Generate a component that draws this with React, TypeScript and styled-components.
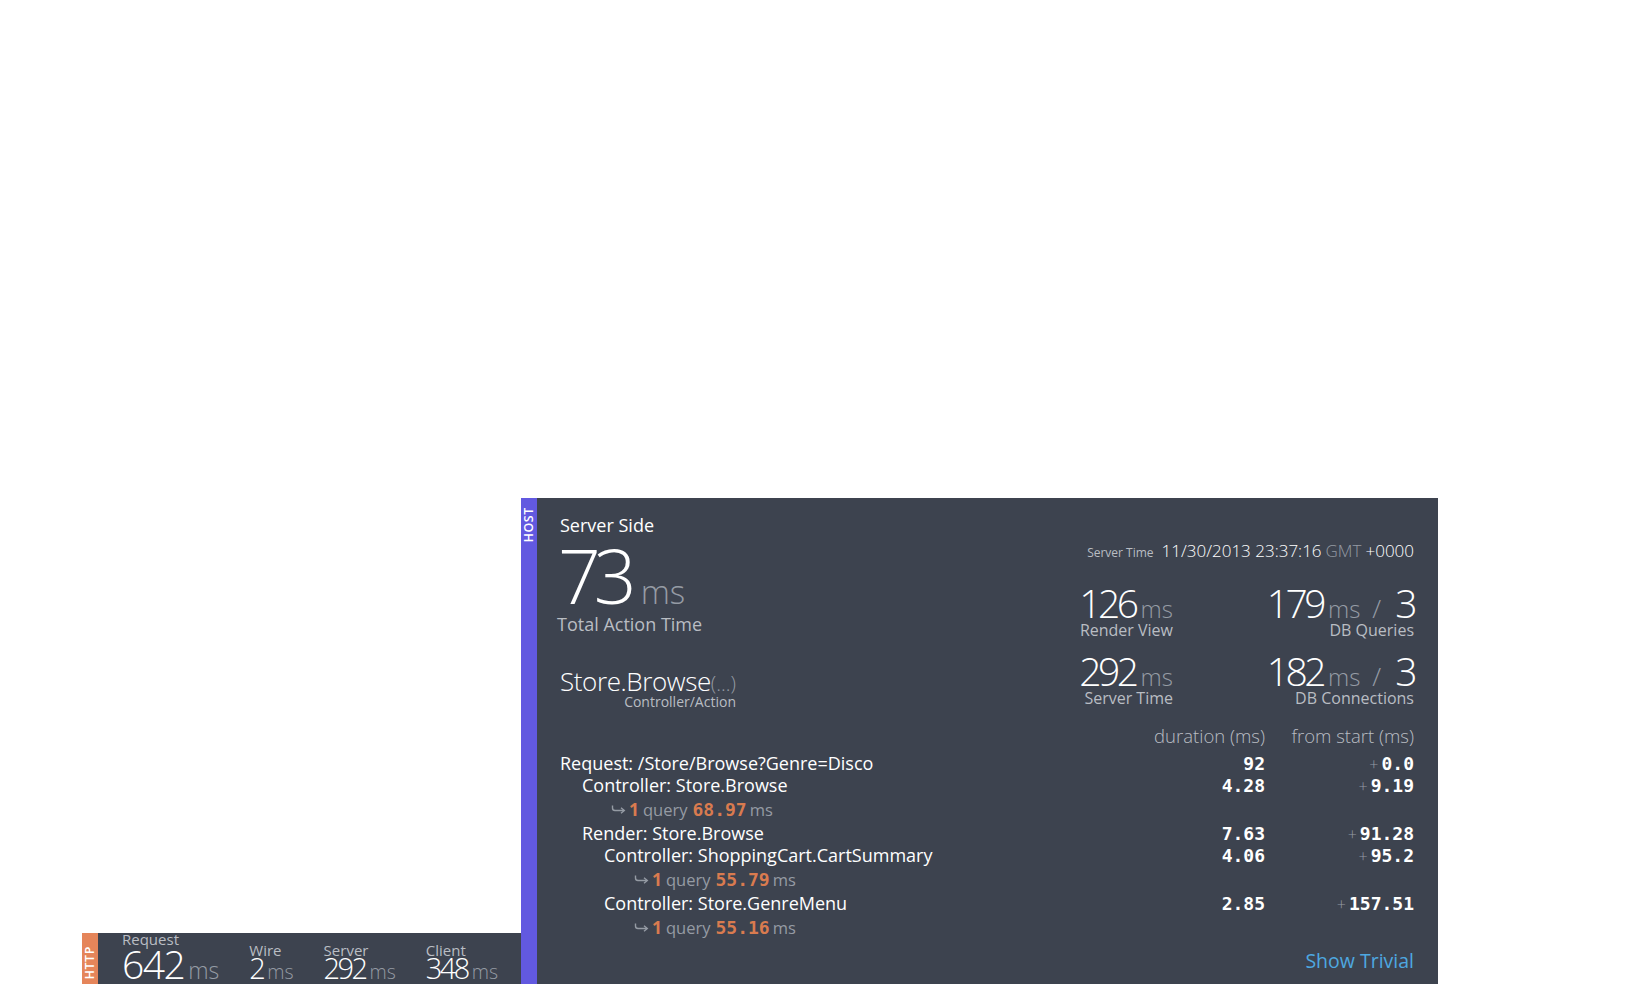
import React from "react";
import styled, { createGlobalStyle, css } from "styled-components";

const Global = createGlobalStyle`
  html, body { margin: 0; padding: 0; background: #ffffff; overflow: hidden; }
  body { font-family: "Open Sans", "Noto Sans", sans-serif; }
`;

const SANS = `"Open Sans", "Noto Sans", sans-serif`;
const MONO = `"DejaVu Sans Mono", "Liberation Mono", monospace`;
const BG = "#3d434f";
const GRAY = "#959ba4";
const LIGHT = "#b9bdc3";
const ORANGE = "#d97b4f";

const numeric = css`
  font-family: ${SANS};
  font-weight: 300;
`;

const Page = styled.div`
  height: 100vh;
  box-sizing: border-box;
  display: flex;
  align-items: flex-end;
  padding-left: 82px;
`;

const Section = styled.section<{ $h: number }>`
  display: flex;
  height: ${(p) => p.$h}px;
  background: ${BG};
  color: #fff;
  overflow: hidden;
  font-family: ${SANS};
`;

const Tab = styled.div<{ $color: string; $top: number }>`
  width: 16px;
  flex: none;
  background: ${(p) => p.$color};
  padding-top: ${(p) => p.$top}px;
  box-sizing: border-box;
`;

const TabLabel = styled.span`
  display: block;
  writing-mode: vertical-rl;
  transform: rotate(180deg);
  font-size: 12.5px;
  font-weight: 600;
  line-height: 16px;
  letter-spacing: 0.6px;
  color: #fff;
`;

/* ---------- HTTP bar ---------- */
const HttpBody = styled.div`
  width: 423px;
  box-sizing: border-box;
  display: flex;
  align-items: flex-end;
  gap: 30px;
  padding: 0 0 6px 24px;
`;

const Metric = styled.div`
  display: flex;
  flex-direction: column;
`;

const MetricLabel = styled.div<{ $gap: number }>`
  font-size: 15px;
  line-height: 12px;
  color: ${LIGHT};
  margin-bottom: ${(p) => p.$gap}px;
  white-space: nowrap;
`;

const MetricValue = styled.div<{ $size: number; $lh: number; $ls: number }>`
  ${numeric};
  font-size: ${(p) => p.$size}px;
  line-height: ${(p) => p.$lh}px;
  letter-spacing: ${(p) => p.$ls}px;
  white-space: nowrap;
`;

const Unit = styled.span<{ $size: number; $gap?: number }>`
  font-family: ${SANS};
  font-size: ${(p) => p.$size}px;
  line-height: 0;
  letter-spacing: 0;
  color: ${GRAY};
  font-weight: 300;
  margin-left: ${(p) => p.$gap ?? 3}px;
`;

/* ---------- Host panel ---------- */
const HostBody = styled.div`
  width: 901px;
  box-sizing: border-box;
  padding: 15px 24px 0 23px;
  display: flex;
  flex-direction: column;
`;

const TopArea = styled.div`
  display: flex;
  justify-content: space-between;
  align-items: flex-start;
`;

const Summary = styled.div`
  display: flex;
  flex-direction: column;
  align-items: flex-start;
`;

const Title = styled.div`
  font-size: 18px;
  line-height: 24px;
`;

const BigValue = styled.div`
  ${numeric};
  margin-top: 6px;
  margin-left: -2px;
  font-size: 75px;
  line-height: 64px;
  letter-spacing: -7px;
`;

const Caption = styled.div`
  margin-top: 6px;
  margin-left: -3px;
  font-size: 18px;
  line-height: 22px;
  color: ${LIGHT};
`;

const ActionBlock = styled.div`
  margin-top: 30px;
  display: flex;
  flex-direction: column;
  align-items: flex-end;
`;

const ActionName = styled.div`
  font-size: 26px;
  line-height: 32px;
  font-weight: 300;
  letter-spacing: -0.4px;
`;

const ActionHint = styled.div`
  margin-top: -3px;
  font-size: 14px;
  line-height: 16px;
  color: ${LIGHT};
`;

const Stats = styled.div`
  padding-top: 26px;
  display: flex;
  flex-direction: column;
  align-items: flex-end;
`;

const ServerTime = styled.div`
  font-size: 17px;
  line-height: 24px;
  font-weight: 300;
  white-space: nowrap;
`;

const Small = styled.span`
  font-size: 12px;
  color: ${LIGHT};
  font-weight: 400;
  margin-right: 8px;
`;

const Dim = styled.span`
  color: ${GRAY};
  margin: 0 4px;
`;

const StatGrid = styled.div`
  margin-top: 18px;
  display: grid;
  grid-template-columns: 100px 241px;
  row-gap: 12px;
  justify-items: end;
`;

const Stat = styled.div`
  display: flex;
  flex-direction: column;
  align-items: flex-end;
`;

const StatValue = styled.div`
  ${numeric};
  font-size: 39px;
  line-height: 40px;
  letter-spacing: -3.5px;
  white-space: nowrap;
`;

const Slash = styled.span`
  font-family: ${SANS};
  font-size: 26px;
  line-height: 0;
  letter-spacing: 0;
  color: ${GRAY};
  font-weight: 300;
  margin: 0 14px 0 12px;
`;

const StatLabel = styled.div`
  margin-top: -2px;
  font-size: 16px;
  line-height: 18px;
  color: ${LIGHT};
  white-space: nowrap;
`;

const Timeline = styled.div`
  margin-top: 14px;
  display: flex;
  flex-direction: column;
`;

const Row = styled.div<{ $head?: boolean }>`
  display: grid;
  grid-template-columns: 1fr 112px 149px;
  align-items: baseline;
  font-size: 18px;
  height: ${(p) => (p.$head ? 24 : 22)}px;
  line-height: ${(p) => (p.$head ? 24 : 22)}px;
  margin-bottom: ${(p) => (p.$head ? 4 : 0)}px;
  color: ${(p) => (p.$head ? LIGHT : "#fff")};
  white-space: nowrap;
`;

const Name = styled.div<{ $depth: number }>`
  padding-left: ${(p) => p.$depth * 22}px;
`;

const Num = styled.div`
  text-align: right;
  font-family: ${MONO};
  font-weight: 700;
  font-size: 18px;
`;

const HeadCell = styled.div`
  text-align: right;
  font-weight: 300;
  font-size: 18.5px;
`;

const Plus = styled.span`
  font-family: ${SANS};
  font-weight: 300;
  font-size: 16px;
  line-height: 0;
  color: ${GRAY};
  margin-right: 3px;
`;

const QueryLine = styled.div<{ $indent: number }>`
  display: flex;
  align-items: baseline;
  height: 26px;
  padding-left: ${(p) => p.$indent}px;
  font-size: 16.5px;
  line-height: 26px;
  color: ${GRAY};
  white-space: nowrap;
`;

const Hook = styled.svg`
  width: 15px;
  height: 9px;
  margin-right: 3px;
  align-self: center;
`;

const QCount = styled.span`
  color: ${ORANGE};
  font-weight: 700;
  font-size: 17.5px;
  margin-right: 4px;
`;

const QTime = styled.span`
  color: ${ORANGE};
  font-family: ${MONO};
  font-weight: 700;
  font-size: 18px;
  margin: 0 3px 0 5px;
`;

const Footer = styled.div`
  margin-top: 9px;
  display: flex;
  justify-content: flex-end;
`;

const TrivialLink = styled.a`
  font-size: 19.5px;
  line-height: 24px;
  color: #4ea8e0;
  text-decoration: none;
  cursor: pointer;
`;

type Item = {
  kind: "row" | "query";
  name?: string;
  depth?: number;
  dur?: string;
  start?: string;
  indent?: number;
  time?: string;
};

const items: Item[] = [
  { kind: "row", name: "Request: /Store/Browse?Genre=Disco", depth: 0, dur: "92", start: "0.0" },
  { kind: "row", name: "Controller: Store.Browse", depth: 1, dur: "4.28", start: "9.19" },
  { kind: "query", indent: 51, time: "68.97" },
  { kind: "row", name: "Render: Store.Browse", depth: 1, dur: "7.63", start: "91.28" },
  { kind: "row", name: "Controller: ShoppingCart.CartSummary", depth: 2, dur: "4.06", start: "95.2" },
  { kind: "query", indent: 74, time: "55.79" },
  { kind: "row", name: "Controller: Store.GenreMenu", depth: 2, dur: "2.85", start: "157.51" },
  { kind: "query", indent: 74, time: "55.16" },
];

const HookIcon = () => (
  <Hook viewBox="0 0 15 9">
    <path d="M1.5 0.5 V3 Q1.5 5.5 4 5.5 H13" fill="none" stroke={GRAY} strokeWidth="1.4" />
    <path d="M10 2.8 L13.3 5.5 L10 8.2" fill="none" stroke={GRAY} strokeWidth="1.4" />
  </Hook>
);

type MetricProps = { label: string; value: string; big?: boolean };

const HttpMetric = ({ label, value, big }: MetricProps) => (
  <Metric>
    <MetricLabel $gap={big ? 5 : 2}>{label}</MetricLabel>
    <MetricValue $size={big ? 39 : 29} $lh={big ? 28 : 20} $ls={big ? -1.5 : -2.6}>
      {value}
      <Unit $size={big ? 23 : 19.5} $gap={big ? 4 : 4}>
        ms
      </Unit>
    </MetricValue>
  </Metric>
);

export default function App() {
  return (
    <>
      <Global />
      <Page>
        <Section $h={51}>
          <Tab $color="#e5855a" $top={13}>
            <TabLabel>HTTP</TabLabel>
          </Tab>
          <HttpBody>
            <HttpMetric label="Request" value="642" big />
            <HttpMetric label="Wire" value="2" />
            <HttpMetric label="Server" value="292" />
            <HttpMetric label="Client" value="348" />
          </HttpBody>
        </Section>

        <Section $h={486}>
          <Tab $color="#6259e0" $top={9}>
            <TabLabel>HOST</TabLabel>
          </Tab>
          <HostBody>
            <TopArea>
              <Summary>
                <Title>Server Side</Title>
                <BigValue>
                  73<Unit $size={33} $gap={11}>ms</Unit>
                </BigValue>
                <Caption>Total Action Time</Caption>
                <ActionBlock>
                  <ActionName>
                    Store.Browse<Unit $size={20} $gap={0}>(...)</Unit>
                  </ActionName>
                  <ActionHint>Controller/Action</ActionHint>
                </ActionBlock>
              </Summary>

              <Stats>
                <ServerTime>
                  <Small>Server Time</Small>
                  11/30/2013 23:37:16<Dim>GMT</Dim>+0000
                </ServerTime>
                <StatGrid>
                  <Stat>
                    <StatValue>
                      126<Unit $size={24} $gap={5}>ms</Unit>
                    </StatValue>
                    <StatLabel>Render View</StatLabel>
                  </Stat>
                  <Stat>
                    <StatValue>
                      179<Unit $size={24} $gap={5}>ms</Unit>
                      <Slash>/</Slash>3
                    </StatValue>
                    <StatLabel>DB Queries</StatLabel>
                  </Stat>
                  <Stat>
                    <StatValue>
                      292<Unit $size={24} $gap={5}>ms</Unit>
                    </StatValue>
                    <StatLabel>Server Time</StatLabel>
                  </Stat>
                  <Stat>
                    <StatValue>
                      182<Unit $size={24} $gap={5}>ms</Unit>
                      <Slash>/</Slash>3
                    </StatValue>
                    <StatLabel>DB Connections</StatLabel>
                  </Stat>
                </StatGrid>
              </Stats>
            </TopArea>

            <Timeline>
              <Row $head>
                <span />
                <HeadCell>duration (ms)</HeadCell>
                <HeadCell>from start (ms)</HeadCell>
              </Row>
              {items.map((it, i) =>
                it.kind === "row" ? (
                  <Row key={i}>
                    <Name $depth={it.depth ?? 0}>{it.name}</Name>
                    <Num>{it.dur}</Num>
                    <Num>
                      <Plus>+</Plus>
                      {it.start}
                    </Num>
                  </Row>
                ) : (
                  <QueryLine key={i} $indent={it.indent ?? 0}>
                    <HookIcon />
                    <QCount>1</QCount>query<QTime>{it.time}</QTime>ms
                  </QueryLine>
                )
              )}
            </Timeline>

            <Footer>
              <TrivialLink>Show Trivial</TrivialLink>
            </Footer>
          </HostBody>
        </Section>
      </Page>
    </>
  );
}
